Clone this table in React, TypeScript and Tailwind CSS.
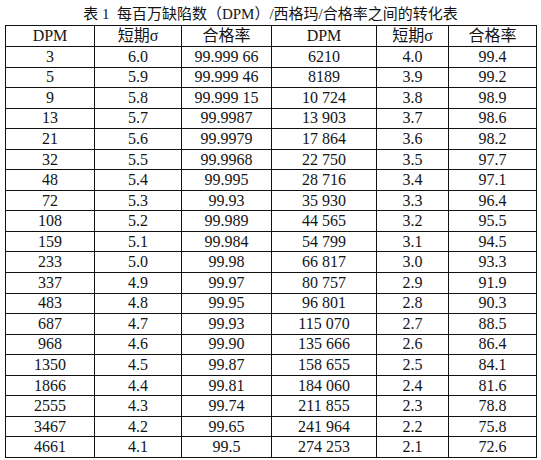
import React from 'react';

type Row = [string, string, string, string, string, string];

// 每百万缺陷数 / 短期σ / 合格率，左右两栏
const rows: Row[] = [
  ['3', '6.0', '99.999 66', '6210', '4.0', '99.4'],
  ['5', '5.9', '99.999 46', '8189', '3.9', '99.2'],
  ['9', '5.8', '99.999 15', '10 724', '3.8', '98.9'],
  ['13', '5.7', '99.9987', '13 903', '3.7', '98.6'],
  ['21', '5.6', '99.9979', '17 864', '3.6', '98.2'],
  ['32', '5.5', '99.9968', '22 750', '3.5', '97.7'],
  ['48', '5.4', '99.995', '28 716', '3.4', '97.1'],
  ['72', '5.3', '99.93', '35 930', '3.3', '96.4'],
  ['108', '5.2', '99.989', '44 565', '3.2', '95.5'],
  ['159', '5.1', '99.984', '54 799', '3.1', '94.5'],
  ['233', '5.0', '99.98', '66 817', '3.0', '93.3'],
  ['337', '4.9', '99.97', '80 757', '2.9', '91.9'],
  ['483', '4.8', '99.95', '96 801', '2.8', '90.3'],
  ['687', '4.7', '99.93', '115 070', '2.7', '88.5'],
  ['968', '4.6', '99.90', '135 666', '2.6', '86.4'],
  ['1350', '4.5', '99.87', '158 655', '2.5', '84.1'],
  ['1866', '4.4', '99.81', '184 060', '2.4', '81.6'],
  ['2555', '4.3', '99.74', '211 855', '2.3', '78.8'],
  ['3467', '4.2', '99.65', '241 964', '2.2', '75.8'],
  ['4661', '4.1', '99.5', '274 253', '2.1', '72.6'],
];

const headers = ['DPM', '短期σ', '合格率', 'DPM', '短期σ', '合格率'];
const widths = ['w-[89px]', 'w-[87px]', 'w-[90px]', 'w-[105px]', 'w-[72px]', 'w-[88px]'];

export default function App() {
  return (
    <div
      className="w-[541px] h-[460px] bg-white pl-[5px] text-[#141414]"
      style={{ fontFamily: '"Liberation Serif", "Noto Sans CJK SC", serif' }}
    >
      <div className="w-[531px] h-[25px] flex items-end justify-center pb-[3px] text-[15px] leading-none">
        表 1&nbsp; 每百万缺陷数（DPM）/西格玛/合格率之间的转化表
      </div>
      <table className="w-[531px] table-fixed border-collapse text-[16px] leading-none">
        <colgroup>
          {widths.map((w, i) => (
            <col key={i} className={w} />
          ))}
        </colgroup>
        <thead>
          <tr className="h-[21px]">
            {headers.map((h, i) => (
              <th key={i} className="border border-[#111] font-normal text-center p-0">
                {h}
              </th>
            ))}
          </tr>
        </thead>
        <tbody>
          {rows.map((r, i) => (
            <tr key={i} className="h-[20.55px]">
              {r.map((c, j) => (
                <td key={j} className="border border-[#111] text-center p-0">
                  {c}
                </td>
              ))}
            </tr>
          ))}
        </tbody>
      </table>
    </div>
  );
}
